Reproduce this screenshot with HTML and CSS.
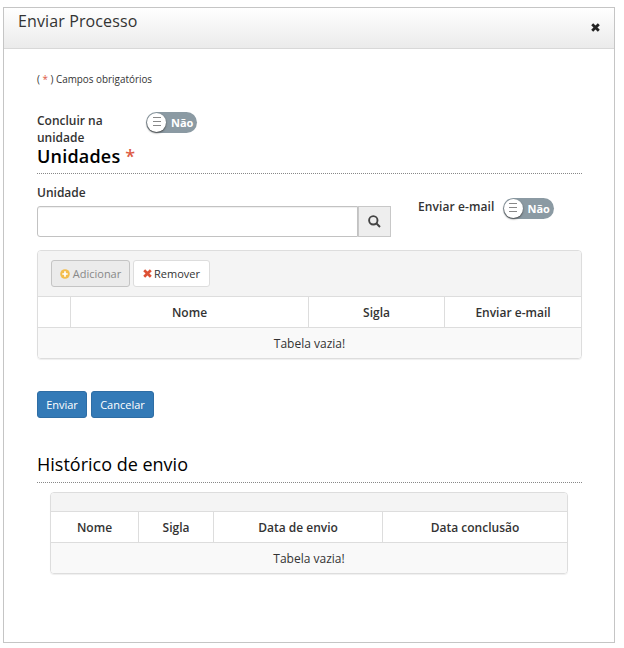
FILE: index.html
```html
<!DOCTYPE html>
<html lang="pt-BR">
<head>
<meta charset="utf-8">
<title>Enviar Processo</title>
<link rel="stylesheet" href="styles.css">
</head>
<body>
<section class="dialog">
  <header class="dialog-header">
    <h1>Enviar Processo</h1>
    <svg class="close" viewBox="0 0 9 9"><path d="M1.2 1.2L7.8 7.8M7.8 1.2L1.2 7.8"/></svg>
  </header>
  <main class="content">
    <p class="note">( <span class="required">*</span> ) Campos obrigatórios</p>
    <div class="finish-row">
      <span class="label finish-label">Concluir na unidade</span>
      <div class="toggle"><span class="knob"><i></i><i></i><i></i></span><span class="toggle-text">Não</span></div>
    </div>
    <h2 class="section-title strong"><span>Unidades <span class="required">*</span></span></h2>
    <div class="unit-row">
      <div class="unit-field">
        <label class="label" for="unit">Unidade</label>
        <div class="input-group">
          <input id="unit" type="text">
          <button class="search" type="button"><svg viewBox="0 0 13 13"><circle cx="5.3" cy="5.3" r="4.2"/><path d="M8.5 8.5L12 12"/></svg></button>
        </div>
      </div>
      <div class="mail-field">
        <span class="label">Enviar e-mail</span>
        <div class="toggle"><span class="knob"><i></i><i></i><i></i></span><span class="toggle-text">Não</span></div>
      </div>
    </div>
    <div class="panel units">
      <div class="toolbar">
        <button class="btn add" type="button" disabled><svg viewBox="0 0 10 10"><circle cx="5" cy="5" r="4.8" fill="#f3bd4d"/><path d="M5 2.3V7.7M2.3 5H7.7" stroke="#fff" stroke-width="1.7"/></svg>Adicionar</button>
        <button class="btn remove" type="button"><svg viewBox="0 0 9 9"><path d="M1.2 1.2L7.8 7.8M7.8 1.2L1.2 7.8" stroke="#dd5135" stroke-width="2.7"/></svg>Remover</button>
      </div>
      <div class="head"><span></span><span>Nome</span><span>Sigla</span><span>Enviar e-mail</span></div>
      <div class="empty">Tabela vazia!</div>
    </div>
    <div class="actions">
      <button class="btn primary send" type="button">Enviar</button>
      <button class="btn primary cancel" type="button">Cancelar</button>
    </div>
    <h2 class="section-title history-title"><span>Histórico de envio</span></h2>
    <div class="panel history">
      <div class="toolbar"></div>
      <div class="head"><span>Nome</span><span>Sigla</span><span>Data de envio</span><span>Data conclusão</span></div>
      <div class="empty">Tabela vazia!</div>
    </div>
  </main>
</section>
</body>
</html>
```
FILE: styles.css
```css
* { box-sizing: border-box; }
body {
  margin: 0;
  padding: 7px 9px 5px 3px;
  background: #fff;
  color: #333;
  font: 12px/17px "Open Sans", sans-serif;
}
h1, h2, p { margin: 0; font-weight: 400; }
button, input { font: inherit; color: inherit; margin: 0; }
.dialog { height: 636px; border: 1px solid #c5c5c5; background: #fff; }
.dialog-header {
  display: flex;
  justify-content: space-between;
  height: 41px;
  padding: 0 14px;
  border-bottom: 1px solid #d8d8d8;
  background: linear-gradient(#fff, #ebebeb);
}
.dialog-header h1 { font-size: 16px; line-height: 26px; letter-spacing: 0.12px; }
.close { width: 9px; height: 9px; margin-top: 15px; fill: none; stroke: #222; stroke-width: 2.8; }
.content { padding: 22px 32px 0 33px; }
.note { font-size: 9.9px; line-height: 17px; height: 42px; }
.required { color: #dd5a43; }
.label { font-weight: 600; font-size: 12px; line-height: 17px; white-space: nowrap; }
.finish-row { display: flex; align-items: flex-start; height: 34px; }
.finish-label { width: 109px; padding-right: 24px; margin-top: -1px; white-space: normal; }
.toggle {
  display: flex;
  align-items: center;
  width: 51px;
  height: 21px;
  padding-left: 1px;
  border-radius: 11px;
  background: #8b9aa3;
}
.finish-row .toggle { margin-top: -1px; }
.knob {
  display: flex;
  flex-direction: column;
  align-items: center;
  justify-content: center;
  gap: 3px;
  width: 19px;
  height: 19px;
  padding-bottom: 2px;
  border-radius: 50%;
  background: #fff;
  box-shadow: 0 1px 2px #444;
}
.knob i { width: 8px; height: 1px; background: #888; }
.toggle-text { margin-left: 5px; color: #fff; font-size: 11px; font-weight: 700; }
.section-title {
  height: 27px;
  border-bottom: 1px dotted #888;
  color: #000;
  font-size: 18px;
  line-height: 18px;
}
.strong { font-weight: 600; letter-spacing: 0.2px; }
.history-title { height: 28px; }
.unit-row { display: flex; height: 76px; padding-top: 10px; }
.unit-field { width: 354px; }
.unit-field .label { display: block; height: 22px; }
.input-group { display: flex; height: 31px; }
.input-group input {
  width: 321px;
  border: 1px solid #c2c2c2;
  border-radius: 3px 0 0 3px;
  background: #fff;
  box-shadow: inset 0 1px 1px #0001;
}
.search {
  display: flex;
  align-items: center;
  justify-content: center;
  width: 33px;
  padding: 0;
  border: 1px solid #c8c8c8;
  background: #eee;
}
.search svg { width: 13px; height: 13px; fill: none; stroke: #444; stroke-width: 1.9; }
.mail-field { display: flex; gap: 8px; padding: 14px 0 0 27px; }
.mail-field .label { letter-spacing: 0.1px; }
.panel { border: 1px solid #ddd; border-radius: 4px; box-shadow: 0 1px 1px #0001; overflow: hidden; }
.toolbar { display: flex; gap: 3px; background: #f4f4f4; }
.units .toolbar { height: 45px; padding: 9px 13px; }
.history .toolbar { height: 18px; }
.btn {
  display: flex;
  align-items: center;
  justify-content: center;
  height: 27px;
  padding: 0;
  border: 1px solid #ddd;
  border-radius: 3px;
  background: #fff;
  font-size: 11px;
}
.add { width: 79px; gap: 3px; border-color: #c4c4c4; background: #ebebeb; color: #888; }
.add svg { width: 10px; height: 10px; }
.remove { width: 77px; gap: 2px; }
.remove svg { width: 9px; height: 9px; }
.head { display: grid; height: 32px; border: solid #ddd; border-width: 1px 0; font-weight: 600; line-height: 31px; text-align: center; }
.head span + span { border-left: 1px solid #ddd; }
.units .head { grid-template-columns: 32px 238px 136px 1fr; }
.history .head { grid-template-columns: 87px 75px 169px 1fr; }
.empty { height: 30px; background: #f9f9f9; line-height: 32px; text-align: center; }
.units { height: 109px; }
.history { width: 518px; height: 82px; margin: 9px 0 0 13px; }
.actions { display: flex; gap: 4px; padding: 32px 0 37px; }
.primary { border-color: #2e6da4; background: #337ab7; color: #fff; }
.send { width: 50px; }
.cancel { width: 63px; }
```
